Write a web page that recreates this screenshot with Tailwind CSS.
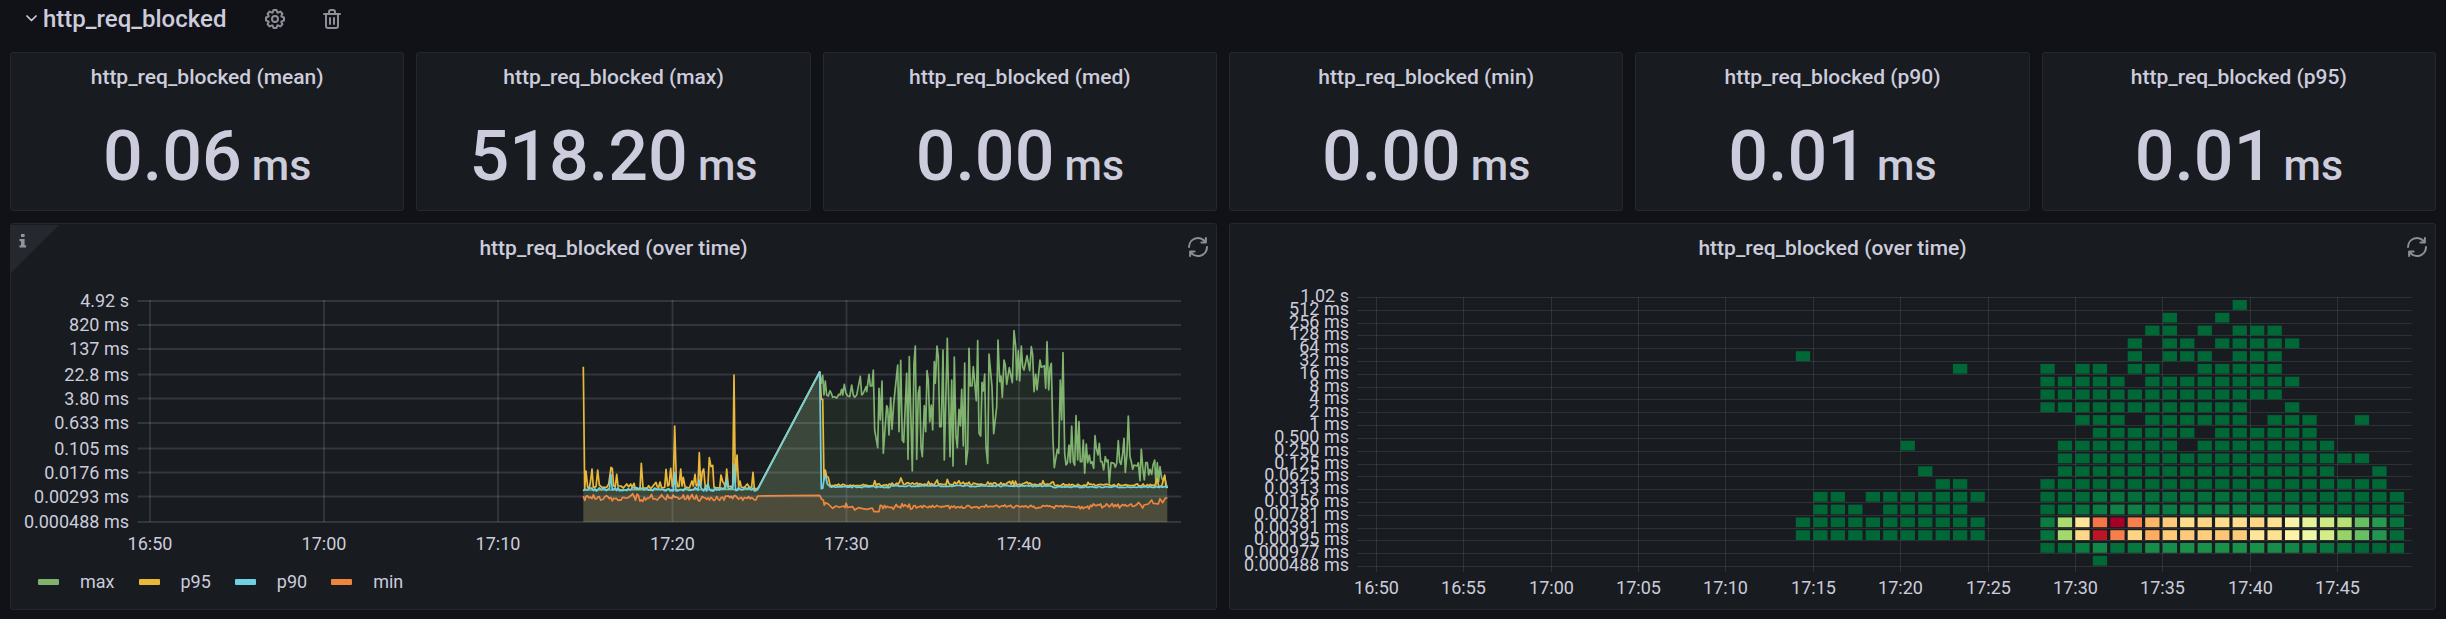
<!DOCTYPE html>
<html lang="en">
<head>
<meta charset="utf-8">
<title>http_req_blocked</title>
<script src="https://cdn.jsdelivr.net/npm/@tailwindcss/browser@4"></script>
</head>
<body class="bg-[#111217] font-[Roboto,sans-serif] text-[#ccccdc]">
<main class="px-[10px] pb-[9px]">
  <header class="flex h-[52px] items-start pl-4">
    <button type="button" class="flex h-[37px] items-center text-2xl font-medium" aria-expanded="true">
      <svg class="mr-[6px] h-[7px] w-[11px]" viewBox="0 0 11 7" fill="none" stroke="currentColor" stroke-width="1.7" stroke-linecap="round" stroke-linejoin="round" aria-hidden="true"><path d="M1 1l4.5 4.5L10 1"/></svg>
      <span>http_req_blocked</span>
    </button>
    <button type="button" aria-label="Row options" class="ml-[37px] flex h-[38px] items-center text-[#8e8e99]">
      <svg class="size-6" viewBox="0 0 24 24" fill="currentColor"><path d="M21.32,9.55l-1.89-.63.89-1.78A1,1,0,0,0,20.13,6L18,3.87a1,1,0,0,0-1.15-.19l-1.78.89-.63-1.89A1,1,0,0,0,13.5,2h-3a1,1,0,0,0-.95.68L8.92,4.57,7.14,3.68A1,1,0,0,0,6,3.87L3.87,6a1,1,0,0,0-.19,1.15l.89,1.78-1.89.63A1,1,0,0,0,2,10.5v3a1,1,0,0,0,.68.95l1.89.63-.89,1.78A1,1,0,0,0,3.87,18L6,20.13a1,1,0,0,0,1.15.19l1.78-.89.63,1.89a1,1,0,0,0,.95.68h3a1,1,0,0,0,.95-.68l.63-1.89,1.78.89A1,1,0,0,0,18,20.13L20.13,18a1,1,0,0,0,.19-1.15l-.89-1.78,1.89-.63A1,1,0,0,0,22,13.5v-3A1,1,0,0,0,21.32,9.55ZM20,12.78l-1.2.4A2,2,0,0,0,17.64,16l.57,1.14-1.1,1.1L16,17.64a2,2,0,0,0-2.79,1.16l-.4,1.2H11.22l-.4-1.2A2,2,0,0,0,8,17.64l-1.14.57-1.1-1.1L6.36,16A2,2,0,0,0,5.2,13.18L4,12.78V11.22l1.2-.4A2,2,0,0,0,6.36,8L5.79,6.89l1.1-1.1L8,6.36A2,2,0,0,0,10.82,5.2l.4-1.2h1.56l.4,1.2A2,2,0,0,0,16,6.36l1.14-.57,1.1,1.1L17.64,8a2,2,0,0,0,1.16,2.79l1.2.4ZM12,8a4,4,0,1,0,4,4A4,4,0,0,0,12,8Zm0,6a2,2,0,1,1,2-2A2,2,0,0,1,12,14Z"/></svg>
    </button>
    <button type="button" aria-label="Delete row" class="ml-[33px] flex h-[38px] items-center text-[#8e8e99]">
      <svg class="size-6" viewBox="0 0 24 24" fill="currentColor"><path d="M10,18a1,1,0,0,0,1-1V11a1,1,0,0,0-2,0v6A1,1,0,0,0,10,18ZM20,6H16V5a3,3,0,0,0-3-3H11A3,3,0,0,0,8,5V6H4A1,1,0,0,0,4,8H5V19a3,3,0,0,0,3,3h8a3,3,0,0,0,3-3V8h1a1,1,0,0,0,0-2ZM10,5a1,1,0,0,1,1-1h2a1,1,0,0,1,1,1V6H10Zm7,14a1,1,0,0,1-1,1H8a1,1,0,0,1-1-1V8H17Zm-3-1a1,1,0,0,0,1-1V11a1,1,0,0,0-2,0v6A1,1,0,0,0,14,18Z"/></svg>
    </button>
  </header>

  <section class="grid grid-cols-6 gap-3">
    <article class="flex flex-col items-center rounded-[3px] border border-[#25272c] bg-[#181b1f] pb-[19px]">
      <h2 class="flex h-[50px] items-center text-[21px] font-medium">http_req_blocked (mean)</h2>
      <p class="mt-[18px] text-[70px] leading-none font-medium">0.06<span class="ml-[10px] text-[43px] leading-none">ms</span></p>
    </article>
    <article class="flex flex-col items-center rounded-[3px] border border-[#25272c] bg-[#181b1f] pb-[19px]">
      <h2 class="flex h-[50px] items-center text-[21px] font-medium">http_req_blocked (max)</h2>
      <p class="mt-[18px] text-[70px] leading-none font-medium">518.20<span class="ml-[10px] text-[43px] leading-none">ms</span></p>
    </article>
    <article class="flex flex-col items-center rounded-[3px] border border-[#25272c] bg-[#181b1f] pb-[19px]">
      <h2 class="flex h-[50px] items-center text-[21px] font-medium">http_req_blocked (med)</h2>
      <p class="mt-[18px] text-[70px] leading-none font-medium">0.00<span class="ml-[10px] text-[43px] leading-none">ms</span></p>
    </article>
    <article class="flex flex-col items-center rounded-[3px] border border-[#25272c] bg-[#181b1f] pb-[19px]">
      <h2 class="flex h-[50px] items-center text-[21px] font-medium">http_req_blocked (min)</h2>
      <p class="mt-[18px] text-[70px] leading-none font-medium">0.00<span class="ml-[10px] text-[43px] leading-none">ms</span></p>
    </article>
    <article class="flex flex-col items-center rounded-[3px] border border-[#25272c] bg-[#181b1f] pb-[19px]">
      <h2 class="flex h-[50px] items-center text-[21px] font-medium">http_req_blocked (p90)</h2>
      <p class="mt-[18px] text-[70px] leading-none font-medium">0.01<span class="ml-[10px] text-[43px] leading-none">ms</span></p>
    </article>
    <article class="flex flex-col items-center rounded-[3px] border border-[#25272c] bg-[#181b1f] pb-[19px]">
      <h2 class="flex h-[50px] items-center text-[21px] font-medium">http_req_blocked (p95)</h2>
      <p class="mt-[18px] text-[70px] leading-none font-medium">0.01<span class="ml-[10px] text-[43px] leading-none">ms</span></p>
    </article>
  </section>

  <section class="mt-3 grid grid-cols-2 gap-3">
    <article class="relative rounded-[3px] border border-[#25272c] bg-[#181b1f]">
      <button type="button" aria-label="Panel description" class="absolute top-px left-0 size-12 text-[#9292a0]">
        <svg class="size-12" viewBox="0 0 48 48"><path d="M0 0H48L0 48Z" fill="#25282f"/><path d="M10 9h3.600v3H10zM8.500 14h5.100v6.300h1.500V22.500H8.500V20.300H10V16.200H8.500z" fill="currentColor"/></svg>
      </button>
      <button type="button" aria-label="Refresh" class="absolute top-[11px] right-[6px] text-[#8e8e99]">
        <svg class="size-6" viewBox="0 0 24 24" fill="currentColor"><path transform="matrix(-1 0 0 1 24 0)" d="M19.91,15.51H15.38a1,1,0,0,0,0,2h2.4A8,8,0,0,1,4,12a1,1,0,0,0-2,0,10,10,0,0,0,16.88,7.23V21a1,1,0,0,0,2,0V16.5A1,1,0,0,0,19.91,15.51ZM12,2A10,10,0,0,0,5.12,4.77V3a1,1,0,0,0-2,0V7.5a1,1,0,0,0,1,1h4.5a1,1,0,0,0,0-2H6.22A8,8,0,0,1,20,12a1,1,0,0,0,2,0A10,10,0,0,0,12,2Z"/></svg>
      </button>
      <h2 class="flex h-[50px] items-center justify-center text-[21px] font-medium">http_req_blocked (over time)</h2>
      <svg id="lines" class="block h-auto w-full text-lg" viewBox="11 274 1205 288" role="img" aria-label="Blocked time by percentile"></svg>
      <ul class="flex h-[47px] items-start gap-6 pl-[27px] text-lg">
        <li><button type="button" class="flex h-[39px] items-center gap-[21px]"><span class="h-[6px] w-[21px] rounded-[1px] bg-[#7eb26d]"></span>max</button></li>
        <li><button type="button" class="flex h-[39px] items-center gap-[21px]"><span class="h-[6px] w-[21px] rounded-[1px] bg-[#eab839]"></span>p95</button></li>
        <li><button type="button" class="flex h-[39px] items-center gap-[21px]"><span class="h-[6px] w-[21px] rounded-[1px] bg-[#6ed0e0]"></span>p90</button></li>
        <li><button type="button" class="flex h-[39px] items-center gap-[21px]"><span class="h-[6px] w-[21px] rounded-[1px] bg-[#ef843c]"></span>min</button></li>
      </ul>
    </article>
    <article class="relative rounded-[3px] border border-[#25272c] bg-[#181b1f]">
      <button type="button" aria-label="Refresh" class="absolute top-[11px] right-[6px] text-[#8e8e99]">
        <svg class="size-6" viewBox="0 0 24 24" fill="currentColor"><path transform="matrix(-1 0 0 1 24 0)" d="M19.91,15.51H15.38a1,1,0,0,0,0,2h2.4A8,8,0,0,1,4,12a1,1,0,0,0-2,0,10,10,0,0,0,16.88,7.23V21a1,1,0,0,0,2,0V16.5A1,1,0,0,0,19.91,15.51ZM12,2A10,10,0,0,0,5.12,4.77V3a1,1,0,0,0-2,0V7.5a1,1,0,0,0,1,1h4.5a1,1,0,0,0,0-2H6.22A8,8,0,0,1,20,12a1,1,0,0,0,2,0A10,10,0,0,0,12,2Z"/></svg>
      </button>
      <h2 class="flex h-[50px] items-center justify-center text-[21px] font-medium">http_req_blocked (over time)</h2>
      <svg id="heat" class="block h-auto w-full text-lg" viewBox="1230 274 1205 335" role="img" aria-label="Blocked time heatmap"></svg>
    </article>
  </section>
</main>
<script>
const NS = 'http://www.w3.org/2000/svg';
function add(parent, tag, attrs, text) {
  const el = document.createElementNS(NS, tag);
  for (const k in attrs) el.setAttribute(k, attrs[k]);
  if (text) el.textContent = text;
  parent.appendChild(el);
}
let seed = 7;
function rnd() { seed = (seed * 16807) % 2147483647; return seed / 2147483647; }

// Line chart
const lines = document.getElementById('lines');
const gridY = [301, 325, 349, 374.5, 398.5, 423, 448.5, 472.5, 496.5, 522];
const yText = ['4.92 s', '820 ms', '137 ms', '22.8 ms', '3.80 ms', '0.633 ms', '0.105 ms', '0.0176 ms', '0.00293 ms', '0.000488 ms'];
const gridX = [150, 324, 498, 672.5, 846.5, 1019];
const xText = ['16:50', '17:00', '17:10', '17:20', '17:30', '17:40'];

// Series points are in thirds of a pixel from the origin (560, 280).
const green = [[70,630],[593,628],[779,276]];
const greenTail = [34,310,38,286,42,345,46,303,50,345,55,348,60,332,64,340,68,352,73,350,80,354,86,343,90,345,95,328,98,345,103,313,108,340,113,348,119,350,125,315,130,345,134,352,140,345,145,320,151,289,155,345,160,340,168,320,170,335,177,283,181,318,186,318,190,270,194,450,203,503,207,325,211,420,216,303,220,520,230,377,233,385,237,465,242,353,246,448,251,370,263,255,267,455,272,241,277,480,281,487,290,280,294,538,298,230,307,573,312,250,316,198,320,538,325,340,329,320,333,500,337,530,343,377,347,455,351,272,355,300,359,425,364,375,368,450,373,245,376,310,381,198,385,230,389,440,394,440,399,210,403,540,412,175,420,530,425,300,429,558,433,231,438,470,442,503,447,388,451,438,455,328,460,498,464,249,468,553,473,510,477,205,481,318,486,318,490,260,499,362,503,182,507,460,512,468,516,307,520,333,524,282,528,500,533,550,537,222,546,320,551,461,560,380,564,180,569,305,573,288,577,352,582,240,586,255,590,313,598,263,607,308,612,152,617,200,620,300,625,212,629,303,634,198,638,260,642,270,651,227,659,272,664,200,668,225,672,335,677,283,681,330,690,240,694,262,703,257,707,325,711,185,716,330,720,265,724,250,729,480,733,563,742,508,746,520,751,300,755,420,759,218,764,520,768,555,772,550,777,495,781,548,785,438,790,545,794,556,798,407,803,540,807,425,811,545,816,545,820,480,824,580,829,492,833,548,838,525,842,550,846,545,851,565,855,467,859,505,864,525,868,490,872,545,876,545,881,570,886,530,890,545,894,540,898,610,903,548,912,550,916,562,920,550,925,482,929,545,933,553,938,520,942,475,946,577,951,520,955,408,960,530,964,545,968,568,972,555,981,558,985,548,990,602,994,508,999,570,1003,600,1007,548,1012,548,1016,585,1020,568,1025,583,1029,555,1034,540,1038,615,1042,548,1046,605,1050,560,1055,595,1059,600,1064,590,1068,610,1072,624];
for (let i = 0; i < greenTail.length; i += 2) green.push([greenTail[i] + 750, greenTail[i + 1]]);

const yellow = [[70,260],[74,626],[78,573],[83,622],[88,625],[92,600],[96,567],[100,622],[108,620],[113,570],[118,615],[126,622],[140,622],[146,612],[153,562],[157,565],[161,618],[166,620],[170,583],[174,618],[183,618],[190,624],[200,612],[206,620],[212,612],[216,622],[222,610],[226,626],[240,626],[244,550],[249,624],[262,624],[266,617],[272,626],[288,607],[292,620],[296,622],[300,606],[305,624],[314,622],[318,568],[323,618],[327,615],[332,565],[337,620],[340,615],[344,438],[349,600],[353,620],[357,620],[362,567],[366,618],[370,592],[375,620],[388,624],[396,603],[400,618],[405,583],[409,618],[414,612],[418,518],[422,620],[427,575],[431,567],[436,622],[440,618],[444,612],[448,533],[453,560],[458,556],[462,622],[479,624],[483,585],[488,605],[492,610],[496,622],[500,567],[505,620],[518,618],[522,285],[526,608],[531,525],[536,620],[540,603],[544,622],[553,622],[562,612],[570,624],[575,620],[579,577],[583,625],[593,626],[779,276],[784,358],[788,358],[792,600],[796,570],[800,590],[805,592],[810,615]];
const bumps = {945: 602, 1022: 594, 1130: 600, 1161: 598, 1196: 602, 1448: 602, 1583: 607};
for (let x = 814; x < 1784; x += 4.35) {
  const mid = x > 990 && x < 1480;
  let y = (mid ? 614 : 617) - rnd() * rnd() * (mid ? 13 : 9) + rnd() * 2;
  for (const b in bumps) if (Math.abs(x - b) < 2.2) y = bumps[b];
  yellow.push([x, y]);
}
yellow.push([1784,618],[1792,595],[1796,620],[1805,618],[1814,585],[1818,620],[1822,624]);

const cyan = [];
const peaks = {153: 583, 344: 578, 418: 600, 500: 598, 522: 552, 442: 612};
for (let x = 70; x < 592; x += 4.35) {
  let y = 629 + (rnd() - 0.6) * 11;
  for (const p in peaks) if (Math.abs(x - p) < 2.2) y = peaks[p];
  cyan.push([x, y]);
}
cyan.push([593,628],[779,276],[784,626],[788,625],[793,592],[797,588],[802,612],[810,620]);
for (let x = 815; x < 1820; x += 4.35) cyan.push([x, (x > 990 && x < 1480 ? 618 : 621) + (rnd() - 0.5) * 4]);
cyan.push([1822, 624]);

const orange = [];
for (let x = 70; x < 592; x += 4.35) orange.push([x, 653 + (rnd() + rnd() - 1) * 14]);
orange.push([593,648],[779,646],[785,658],[790,660],[793,675],[797,668],[805,672],[818,685],[828,678],[838,682],[850,678],[855,683],[858,670],[863,682],[878,680],[884,690],[895,683],[908,686],[920,688],[937,684],[942,695],[957,695],[961,676]);
for (let x = 965; x < 1745; x += 4.35) orange.push([x, (x < 1550 ? 680 : 680 - (x - 1550) / 28) + (rnd() + rnd() - 1) * (x < 1060 || x > 1540 ? 10 : 6)]);
orange.push([1748,684],[1752,675],[1765,672],[1775,660],[1780,670],[1795,672],[1800,656],[1808,668],[1815,655],[1822,653]);

for (const [color, pts] of [['#7eb26d', green], ['#eab839', yellow], ['#6ed0e0', cyan], ['#ef843c', orange]]) {
  const d = pts.map(p => (560 + p[0] / 3).toFixed(1) + ' ' + (280 + p[1] / 3).toFixed(1)).join('L');
  const end = (560 + pts[pts.length - 1][0] / 3).toFixed(1);
  add(lines, 'path', {d: 'M583.3 522L' + d + 'L' + end + ' 522Z', fill: color, 'fill-opacity': 0.1});
  add(lines, 'path', {d: 'M' + d, fill: 'none', stroke: color, 'stroke-width': 1.7, 'stroke-linejoin': 'round'});
}
gridY.forEach((y, i) => {
  add(lines, 'path', {d: `M137.500 ${y}H1181`, stroke: '#c8c8dc', 'stroke-opacity': 0.16, 'stroke-width': 1.8});
  add(lines, 'text', {x: 129, y: Math.round(y + 6), 'text-anchor': 'end', fill: 'currentColor'}, yText[i]);
});
gridX.forEach((x, i) => {
  add(lines, 'path', {d: `M${x} 300V522`, stroke: '#c8c8dc', 'stroke-opacity': 0.16, 'stroke-width': 1.8});
  add(lines, 'text', {x: x, y: 550, 'text-anchor': 'middle', fill: 'currentColor'}, xText[i]);
});

// Heatmap: one column per minute from 17:14, one row per bucket
const heat = document.getElementById('heat');
const buckets = ['1.02 s','512 ms','256 ms','128 ms','64 ms','32 ms','16 ms','8 ms','4 ms','2 ms','1 ms','0.500 ms','0.250 ms','0.125 ms','0.0625 ms','0.0313 ms','0.0156 ms','0.00781 ms','0.00391 ms','0.00195 ms','0.000977 ms','0.000488 ms'];
const times = ['16:50','16:55','17:00','17:05','17:10','17:15','17:20','17:25','17:30','17:35','17:40','17:45'];
buckets.forEach((t, i) => {
  const y = Math.round(297 + i * 12.81) + 0.5;
  add(heat, 'path', {d: `M1357.500 ${y}H2412`, stroke: '#c8dcd2', 'stroke-opacity': 0.12});
  add(heat, 'text', {x: 1349, y: y + 4.5, 'text-anchor': 'end', fill: 'currentColor'}, t);
});
times.forEach((t, i) => {
  const x = Math.round(1376 + i * 87.36) + 0.5;
  add(heat, 'path', {d: `M${x} 297V572`, stroke: '#c8dcd2', 'stroke-opacity': 0.12});
  add(heat, 'text', {x: x, y: 594, 'text-anchor': 'middle', fill: 'currentColor'}, t);
});
const cells = [
  '.........................#.........',
  '.....................#..#..........',
  '....................##.#.###.......',
  '...................#.##.#####......',
  '#..................#.###.###.......',
  '.........#....#.##.##..#####.......',
  '..............#####.#########......',
  '..............##############.......',
  '..............############..#......',
  '................###.######.###..#..',
  '.................######.######.....',
  '......#........#######.########....',
  '...............##################..',
  '.......#.......################..#.',
  '........##....####################.',
  '.##.#######...#####################',
  '.###.#####....#####################',
  '###########...#####################',
  '###########...#####################',
  '..............#####################',
  '.................#.................'
];
const tints = {
  15: ['#006837','#006837','#016a38','#06733c','#06733c','#046f3b','#046f3b','#046f3b','#046f3b','#046f3b','#06703b','#046f3b','#016a38','#016a38','#016a38'],
  16: ['#006837','#016d39','#06733c','#0a7b41','#0f8345','#0f8044','#0a7b41','#0a7b41','#0a7b41','#0a7b41','#0f8044','#0a7b41','#0a7b41','#08773f','#08773f','#06733c','#046f3b','#016a38'],
  17: ['#0a7b41','#abdc6e','#fee597','#f57547','#a50026','#f67f4b','#fdb768','#fdca79','#fede8b','#fed583','#fedd8b','#fede8e','#fed581','#fee292','#f9f3a8','#e5f49b','#d0eb84','#b7e075','#68be62','#279a52','#06733c'],
  18: ['#06733c','#a2d86c','#fed889','#bb1526','#f67f4b','#fed382','#fdac60','#fdca79','#fdca7b','#fece7d','#fdc676','#fdca7a','#fee597','#fee292','#fbf3a8','#eff8a8','#d4ed88','#95d267','#68be62','#229650','#046b38'],
  19: ['#006837','#016a38','#0a7b41','#138648','#046f3b','#08773f','#188c4a','#188c4a','#1a9049','#1a9049','#1a9049','#1a9049','#1a9049','#188c4a','#138648','#0d8044','#08773f','#06703b']
};
cells.forEach((row, r) => {
  [...row].forEach((ch, c) => {
    if (ch !== '#') return;
    const tint = c > 13 && tints[r] && tints[r][c - 14] || '#006837';
    add(heat, 'rect', {x: (1795.800 + c * 17.47).toFixed(1), y: (300 + r * 12.79).toFixed(1), width: 14.3, height: 9.8, fill: tint});
  });
});
</script>
</body>
</html>
